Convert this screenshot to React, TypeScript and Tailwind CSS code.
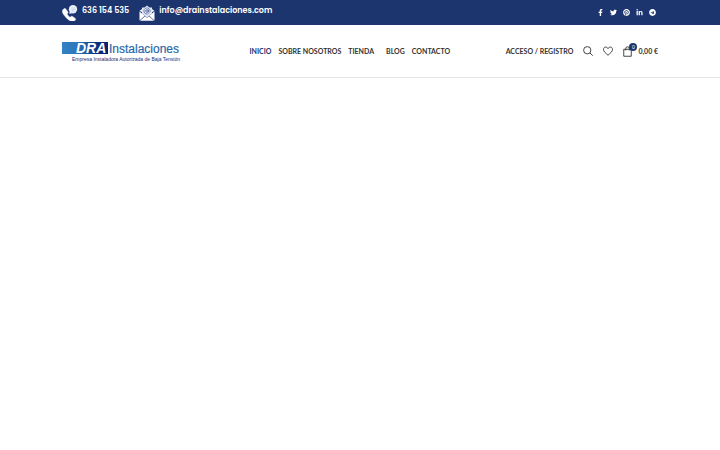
import React from "react";
import { FaFacebookF, FaTwitter, FaPinterest, FaLinkedinIn, FaTelegram } from "react-icons/fa";

function PhoneIcon() {
  return (
    <svg viewBox="0 0 32 32" className="size-4 shrink-0" aria-hidden="true">
      <path d="M1.500 10c2-3 5-4 6.500-1.500l3.500 5c1 1.500.5 3-1.500 4.500 1.500 3 3.500 5 6.500 6.500 1.500-2 3-2.500 4.500-1.500l5 3.500c2 1.500 1.500 4-1.500 5.500-4 1.500-9 0-14-4.500C4.500 21.500-1.500 14.500 1.500 10z" fill="#fff" stroke="#fff" />
      <circle cx="22" cy="8.500" r="8.300" fill="#e8eefb" />
      <path d="M15.500 12l-1 6 6-2z" fill="#e8eefb" />
      <path d="M19 6h8M19 9h8M19 12h5" stroke="#b4c1e0" strokeWidth="1" fill="none" />
    </svg>
  );
}

function MailIcon() {
  return (
    <svg viewBox="0 0 32 32" className="size-4 shrink-0" aria-hidden="true">
      <path d="M1 12L6 8v6zM31 12l-5-4v6zM1 13l10.500 8.500L1 31zM31 13l-10.500 8.500L31 31z" fill="#fff" />
      <path d="M6 5h5l5-4 5 4h5v12l-10 8-10-8z" fill="#dfe7f7" />
      <path d="M2 31.500l10-9 4 3 4-3 10 9z" fill="#fff" />
      <circle cx="16" cy="12" r="2.600" fill="none" stroke="#3c5288" strokeWidth="1.500" />
      <path d="M18.600 9v4c0 2.500 3.600 2 3.600-1a6.200 6.200 0 1 0-3 5.300" fill="none" stroke="#3c5288" strokeWidth="1.300" />
    </svg>
  );
}

function Logo() {
  return (
    <svg viewBox="0 0 120 20" className="block h-5 w-[120px] overflow-visible font-['Liberation_Sans',sans-serif] font-normal" role="img" aria-label="DRA Instalaciones">
      <defs>
        <linearGradient id="logoBand" x1="0" x2="1">
          <stop offset="0" stopColor="#3382c4" />
          <stop offset="0.350" stopColor="#2c76b8" />
          <stop offset="0.750" stopColor="#0c3180" />
          <stop offset="1" stopColor="#07206b" />
        </linearGradient>
      </defs>
      <path d="M0 1h46v12H0z" fill="url(#logoBand)" />
      <text x="14" y="12" fontSize="14" fontWeight="700" fontStyle="italic" fill="#fff">DRA</text>
      <text x="47" y="12" fontSize="12" fill="#2869aa" stroke="#2869aa" strokeWidth="0.200">Instalaciones</text>
      <text x="10" y="20" fontSize="5" fill="#1c2c74">Empresa Instaladora Autorizada de Baja Tensión</text>
    </svg>
  );
}

const socials = [
  { label: "Facebook", Icon: FaFacebookF },
  { label: "Twitter", Icon: FaTwitter },
  { label: "Pinterest", Icon: FaPinterest },
  { label: "LinkedIn", Icon: FaLinkedinIn },
  { label: "Telegram", Icon: FaTelegram },
];

export default function App() {
  return (
    <div className="bg-white font-[Lato,sans-serif] text-[7px] leading-[10px] font-bold text-[#333333]">
      <div className="h-[25px] bg-[#1d356e] text-white">
        <div className="mx-auto flex h-full max-w-[596px] items-center justify-between">
          <div className="flex gap-2.5 font-[Poppins,Inter,sans-serif] text-[8px] leading-[12px] font-semibold">
            <a href="#telefono" className="flex h-4 gap-1">
              <PhoneIcon />
              <span>636 154 535</span>
            </a>
            <a href="#correo" className="flex h-4 gap-1">
              <MailIcon />
              <span>info@drainstalaciones.com</span>
            </a>
          </div>
          <div className="flex items-center gap-1.5 pr-0.5">
            {socials.map(({ label, Icon }) => (
              <a key={label} href="#social" aria-label={label} className="flex w-[7px] justify-center">
                <Icon className="size-[7px]" />
              </a>
            ))}
          </div>
        </div>
      </div>
      <header className="border-b border-[#e6e6e6]">
        <div className="mx-auto flex h-[52px] max-w-[596px] items-center">
          <a href="#inicio" className="shrink-0">
            <Logo />
          </a>
          <nav className="flex flex-1 justify-center gap-[7px] pl-3 whitespace-nowrap">
            <a href="#inicio" className="text-[#1d356e]">INICIO</a>
            <a href="#nosotros">SOBRE NOSOTROS</a>
            <a href="#tienda" className="pr-[5px]">TIENDA</a>
            <a href="#blog">BLOG</a>
            <a href="#contacto">CONTACTO</a>
          </nav>
          <div className="flex items-center gap-2.5 whitespace-nowrap">
            <a href="#acceso">ACCESO / REGISTRO</a>
            <button type="button" aria-label="Buscar">
              <svg viewBox="0 0 20 20" className="size-2.5" fill="none" stroke="#333" strokeWidth="1.800">
                <circle cx="8.500" cy="8.500" r="7.300" />
                <path d="M14 14l5.500 5.500" />
              </svg>
            </button>
            <a href="#deseos" aria-label="Lista de deseos">
              <svg viewBox="0 0 20 20" className="size-2.5" fill="none" stroke="#333" strokeWidth="1.800" strokeLinejoin="round">
                <path d="M10 18.500C5 14 1 11 1 6.800 1 1.500 7.500.5 10 5c2.500-4.500 9-3.500 9 1.800 0 4.200-4 7.200-9 11.700z" />
              </svg>
            </a>
            <a href="#carrito" aria-label="Carrito" className="flex items-center gap-[5px]">
              <span className="relative">
                <svg viewBox="0 0 20 22" className="h-[11px] w-2.5" fill="none" stroke="#333" strokeWidth="1.800">
                  <path d="M1.500 6.500h15v14h-15zM5.500 9V5a3.500 3.500 0 0 1 7 0v4" />
                </svg>
                <span className="absolute -top-[3px] -right-1 flex size-[8px] items-center justify-center rounded-full bg-[#1d356e] text-[5px] leading-[8px] font-normal text-white">0</span>
              </span>
              <span>0,00 €</span>
            </a>
          </div>
        </div>
      </header>
      <main />
    </div>
  );
}
